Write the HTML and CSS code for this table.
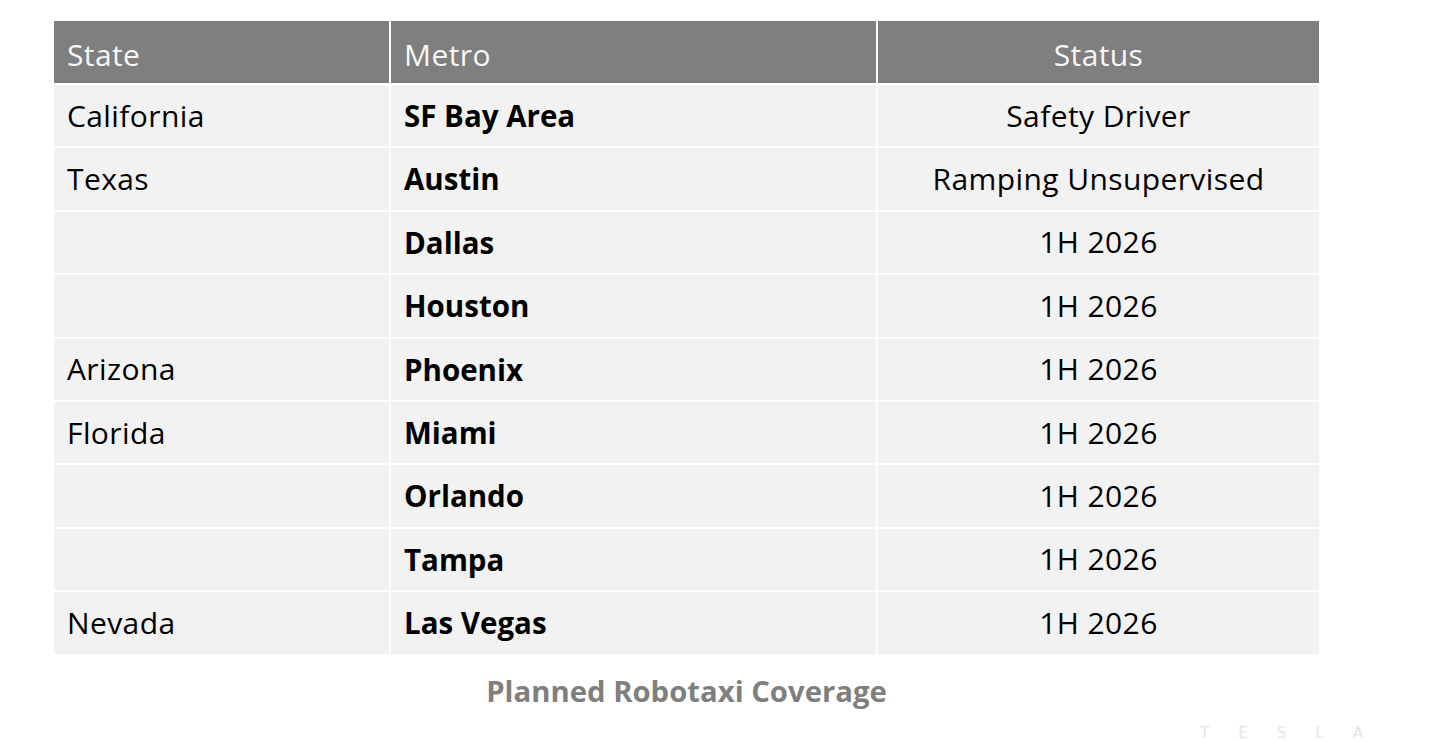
FILE: index.html
```html
<!DOCTYPE html>
<html lang="en">
<head>
<meta charset="utf-8">
<title>Planned Robotaxi Coverage</title>
<link rel="stylesheet" href="styles.css">
</head>
<body>
<main class="page">
  <table class="coverage">
    <thead>
      <tr>
        <th class="col-state">State</th>
        <th class="col-metro">Metro</th>
        <th class="col-status">Status</th>
      </tr>
    </thead>
    <tbody>
      <tr><td class="state">California</td><td class="metro">SF Bay Area</td><td class="status">Safety Driver</td></tr>
      <tr><td class="state">Texas</td><td class="metro">Austin</td><td class="status">Ramping Unsupervised</td></tr>
      <tr><td class="state"></td><td class="metro">Dallas</td><td class="status">1H 2026</td></tr>
      <tr><td class="state"></td><td class="metro">Houston</td><td class="status">1H 2026</td></tr>
      <tr><td class="state">Arizona</td><td class="metro">Phoenix</td><td class="status">1H 2026</td></tr>
      <tr><td class="state">Florida</td><td class="metro">Miami</td><td class="status">1H 2026</td></tr>
      <tr><td class="state"></td><td class="metro">Orlando</td><td class="status">1H 2026</td></tr>
      <tr><td class="state"></td><td class="metro">Tampa</td><td class="status">1H 2026</td></tr>
      <tr><td class="state">Nevada</td><td class="metro">Las Vegas</td><td class="status">1H 2026</td></tr>
    </tbody>
    <caption class="caption">Planned Robotaxi Coverage</caption>
  </table>
  <div class="brand"><span class="brand-mark">TESLA</span></div>
</main>
</body>
</html>
```

FILE: styles.css
```css
html, body {
  margin: 0;
  padding: 0;
  background: #ffffff;
}

.page {
  padding: 21px 0 0 54px;
  font-family: "Open Sans", Lato, sans-serif;
  color: #000000;
  height: 720px;
  overflow: hidden;
}

.coverage {
  width: 1265px;
  border-collapse: separate;
  border-spacing: 0;
  table-layout: fixed;
  font-size: 30px;
  letter-spacing: 0.4px;
}

.coverage th,
.coverage td {
  box-sizing: border-box;
  background: #f2f2f2;
  border-right: 2px solid #ffffff;
  border-bottom: 2px solid #ffffff;
  padding: 0 0 0 13px;
  height: 63.4px;
  line-height: 1;
  vertical-align: middle;
  text-align: left;
}

.col-state { width: 337px; }
.col-metro { width: 487px; }
.col-status { width: 441px; }

.coverage th {
  background: #7f7f7f;
  color: #f7f7f7;
  font-weight: 400;
  height: 64px;
  padding-top: 5px;
}

.coverage th:last-child,
.coverage td:last-child {
  border-right: 0;
  padding-left: 0;
  text-align: center;
}

.coverage tbody tr:last-child td {
  border-bottom: 0;
  height: 61.4px;
}

.metro {
  font-weight: 700;
  font-size: 29.5px;
  letter-spacing: 0;
}

.caption {
  caption-side: bottom;
  padding-top: 23px;
  font-size: 29.3px;
  font-weight: 700;
  letter-spacing: 0;
  color: #7f7f7f;
  text-align: center;
  line-height: 1;
}

.brand {
  padding: 20px 0 0 1146px;
}

.brand-mark {
  display: block;
  font-family: "DejaVu Sans", sans-serif;
  font-size: 15px;
  letter-spacing: 29px;
  color: #e6e6e6;
  line-height: 1;
}
```
